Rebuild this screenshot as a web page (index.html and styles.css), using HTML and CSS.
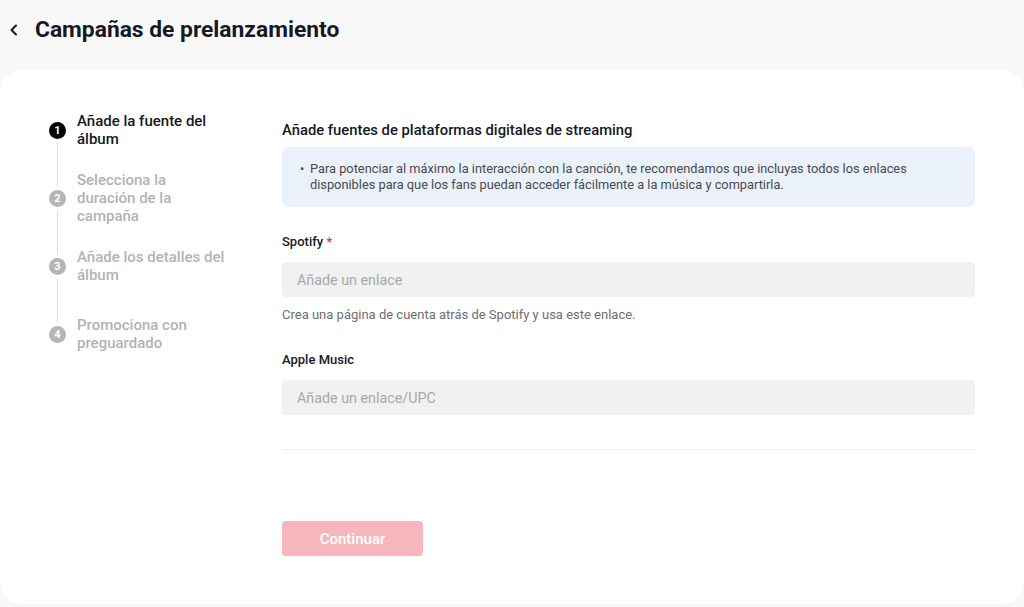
FILE: index.html
```html
<!DOCTYPE html>
<html lang="es">
<head>
<meta charset="utf-8">
<title>Campañas de prelanzamiento</title>
<link rel="stylesheet" href="styles.css">
</head>
<body>
<header class="topbar">
  <button class="back" aria-label="Atrás">
    <svg width="10" height="12" viewBox="0 0 10 12"><path d="M7 1.5 L2.5 6 L7 10.5" fill="none" stroke="#161823" stroke-width="2" stroke-linecap="round" stroke-linejoin="round"/></svg>
  </button>
  <h1 class="title">Campañas de prelanzamiento</h1>
</header>
<main class="card">
  <nav class="steps">
    <div class="step active first">
      <div class="rail"><span class="seg"></span><span class="dot">1</span><span class="seg"></span></div>
      <div class="label">Añade la fuente del<br>álbum</div>
    </div>
    <div class="step">
      <div class="rail"><span class="seg"></span><span class="dot">2</span><span class="seg"></span></div>
      <div class="label">Selecciona la<br>duración de la<br>campaña</div>
    </div>
    <div class="step">
      <div class="rail"><span class="seg"></span><span class="dot">3</span><span class="seg"></span></div>
      <div class="label">Añade los detalles del<br>álbum</div>
    </div>
    <div class="step last">
      <div class="rail"><span class="seg"></span><span class="dot">4</span><span class="seg"></span></div>
      <div class="label">Promociona con<br>preguardado</div>
    </div>
  </nav>
  <section class="form">
    <h2 class="heading">Añade fuentes de plataformas digitales de streaming</h2>
    <div class="info">
      <span class="bullet">•</span>
      <p>Para potenciar al máximo la interacción con la canción, te recomendamos que incluyas todos los enlaces disponibles para que los fans puedan acceder fácilmente a la música y compartirla.</p>
    </div>
    <label class="field-label spotify-label">Spotify <span class="req">*</span></label>
    <div class="input">Añade un enlace</div>
    <p class="help">Crea una página de cuenta atrás de Spotify y usa este enlace.</p>
    <label class="field-label apple-label">Apple Music</label>
    <div class="input">Añade un enlace/UPC</div>
    <hr class="divider">
    <button class="continue">Continuar</button>
  </section>
</main>
</body>
</html>
```
FILE: styles.css
```css
* { box-sizing: border-box; }
html, body { margin: 0; padding: 0; }
body {
  background: #f8f8f8;
  font-family: Roboto, "Liberation Sans", sans-serif;
  color: #161823;
  height: 607px;
  overflow: hidden;
}
.topbar {
  height: 70px;
  display: flex;
  align-items: center;
  padding: 0 0 10px 9px;
}
.back {
  border: 0;
  background: none;
  padding: 0;
  width: 12px;
  height: 14px;
  display: flex;
  align-items: center;
  margin-right: 14px;
}
.title {
  margin: 0;
  font-size: 22.8px;
  font-weight: 700;
  line-height: 28px;
}
.card {
  background: #fff;
  border-radius: 22px;
  height: 534px;
  display: flex;
  padding: 26px 49px 48px 49px;
}
.steps {
  width: 233px;
  flex: none;
  display: flex;
  flex-direction: column;
}
.step {
  height: 68px;
  display: flex;
  gap: 11px;
}
.rail {
  width: 17px;
  display: flex;
  flex-direction: column;
  align-items: center;
}
.seg {
  flex: 1;
  width: 1px;
  background: #e0e0e0;
}
.step .seg:first-child { margin-bottom: 4px; }
.step .seg:last-child { margin-top: 4px; }
.step.first .seg:first-child,
.step.last .seg:last-child { background: transparent; }
.dot {
  width: 17px;
  height: 17px;
  border-radius: 50%;
  background: #b6b6b6;
  color: #fff;
  font-size: 11px;
  font-weight: 700;
  display: flex;
  align-items: center;
  justify-content: center;
  flex: none;
}
.active .dot { background: #000; }
.label {
  align-self: center;
  font-size: 15px;
  line-height: 18px;
  color: #b3b3b3;
  font-weight: 500;
}
.active .label { color: #161823; }
.form {
  flex: 1;
  display: flex;
  flex-direction: column;
  align-items: flex-start;
  padding-top: 24px;
}
.heading {
  margin: 0;
  font-size: 14.8px;
  line-height: 20px;
  font-weight: 500;
}
.info {
  margin-top: 7px;
  width: 100%;
  height: 60px;
  background: #eaf1fb;
  border-radius: 6px;
  display: flex;
  padding: 14px 16px 14px 18px;
  font-size: 12.8px;
  line-height: 16px;
  color: #4a4a50;
}
.bullet { width: 10px; flex: none; }
.info p { margin: 0; }
.field-label {
  font-size: 13px;
  line-height: 18px;
  font-weight: 500;
}
.spotify-label { margin-top: 26px; }
.apple-label { margin-top: 28px; }
.req { color: #fe2c55; }
.input {
  margin-top: 11px;
  width: 100%;
  height: 35px;
  background: #f1f1f2;
  border-radius: 4px;
  display: flex;
  align-items: center;
  padding-left: 15px;
  font-size: 14.3px;
  color: #a8a8ab;
}
.help {
  margin: 10px 0 0;
  font-size: 13px;
  line-height: 16px;
  color: #6e6e73;
}
.divider {
  width: 100%;
  margin: 34px 0 0;
  border: 0;
  border-top: 1px solid #ececec;
}
.continue {
  margin-top: 71px;
  width: 141px;
  height: 35px;
  border: 0;
  border-radius: 4px;
  background: #f5b6bd;
  color: #fff;
  font-family: inherit;
  font-size: 15px;
  font-weight: 500;
}
```
